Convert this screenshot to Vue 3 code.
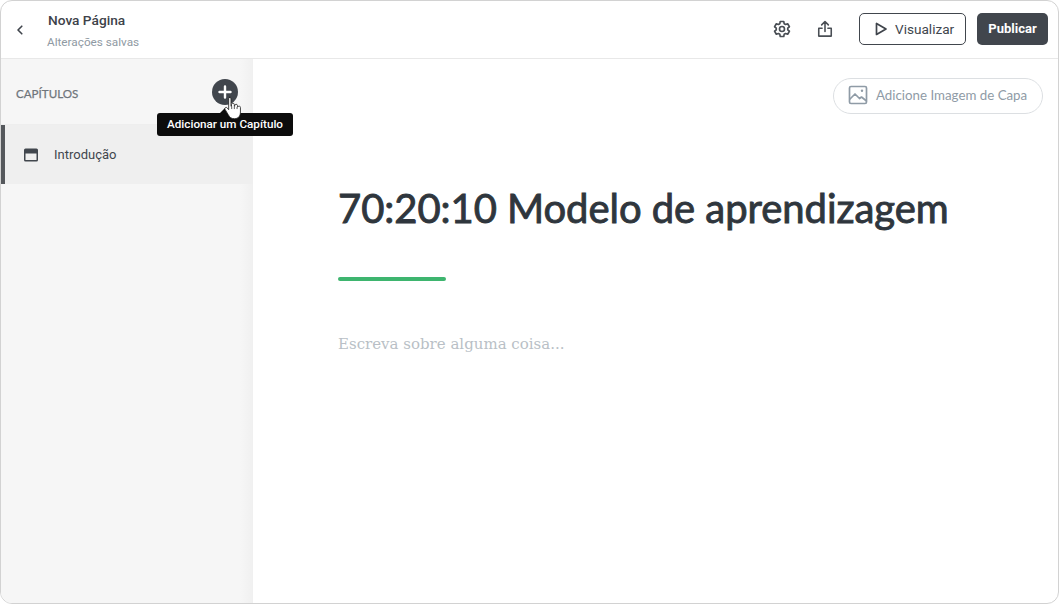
<script setup>
const chapters = [{ id: 1, title: "Introdução" }];
</script>

<template>
  <div class="frame">
    <header class="topbar">
      <div class="top-left">
        <button class="back" aria-label="Voltar">
          <svg width="12" height="12" viewBox="0 0 12 12" fill="none" stroke="#3f444b" stroke-width="1.6" stroke-linecap="round" stroke-linejoin="round"><path d="M7.800 2.200 4 6l3.800 3.800" /></svg>
        </button>
        <div class="page-info">
          <div class="page-name">Nova Página</div>
          <div class="page-status">Alterações salvas</div>
        </div>
      </div>
      <div class="top-right">
        <button class="icon-btn" aria-label="Configurações">
          <svg width="20" height="20" viewBox="0 0 24 24" fill="none" stroke="#4a4f55" stroke-width="2" stroke-linejoin="round"><path d="M9.900 3h4.200l.5 2.600 1.700 1 2.500-.9 2.100 3.600-2 1.700v2l2 1.700-2.100 3.600-2.500-.9-1.700 1-.5 2.600H9.900l-.5-2.600-1.700-1-2.500.9-2.100-3.600 2-1.700v-2l-2-1.700 2.100-3.600 2.500.9 1.700-1z" /><circle cx="12" cy="12" r="3" /></svg>
        </button>
        <button class="icon-btn" aria-label="Compartilhar">
          <svg width="20" height="20" viewBox="0 0 24 24" fill="none" stroke="#4a4f55" stroke-width="1.9" stroke-linecap="round" stroke-linejoin="round"><path d="M12 15V3.500M8 7l4-4 4 4M8.500 11H4.500v9.500h15V11h-4" /></svg>
        </button>
        <button class="preview">
          <svg width="14" height="14" viewBox="0 0 14 14" fill="none" stroke="#3f444b" stroke-width="1.700" stroke-linejoin="round"><path d="M2.500 1.500v11l9.500-5.500z" /></svg>
          Visualizar
        </button>
        <button class="publish">Publicar</button>
      </div>
    </header>

    <div class="body">
      <aside class="sidebar">
        <div class="side-head">
          <span class="side-title">CAPÍTULOS</span>
          <button class="add" aria-label="Adicionar um Capítulo">
            <svg width="14" height="14" viewBox="0 0 14 14" stroke="#fff" stroke-width="2.400" stroke-linecap="round"><path d="M7 1.500v11M1.500 7h11" /></svg>
          </button>
          <div class="tooltip">Adicionar um Capítulo</div>
          <svg class="cursor" width="21" height="26" viewBox="0 0 20 24">
            <path d="M6 1.800c.9 0 1.600.7 1.600 1.600v7l.5-.1V8.800c0-1.900 2.500-1.900 2.700-.1v1.600l.4.1V9.600c.2-1.600 2.500-1.500 2.600.1v1.200l.4.1c.3-1.300 2.400-1.100 2.400.6v4.200c0 3.300-1.700 6.400-5.600 6.400-3.200 0-4.600-1.300-6-3.800l-3-5c-.9-1.500 1-2.700 2-1.500l1.400 1.700V3.400c0-.9.7-1.600 1.600-1.600z" fill="#fff" stroke="#222" stroke-width=".8" stroke-linejoin="round" />
            <path d="M8.300 10.500v2.500M10.800 10.500v2.500M13.400 11v2" stroke="#222" stroke-width=".7" fill="none" />
          </svg>
        </div>
        <div v-for="c in chapters" :key="c.id" class="chapter">
          <svg width="14" height="14" viewBox="0 0 14 14"><path fill-rule="evenodd" d="M1.500 .5h11A1.500 1.500 0 0 1 14 2v10a1.500 1.500 0 0 1-1.500 1.500h-11A1.500 1.500 0 0 1 0 12V2A1.500 1.500 0 0 1 1.500 .5zM1.500 5.500V12h11V5.500z" fill="#41464d" /></svg>
          <span>{{ c.title }}</span>
        </div>
      </aside>

      <main class="editor">
        <div class="cover-row">
          <button class="cover">
            <svg width="20" height="20" viewBox="0 0 20 20" fill="none" stroke="#8f9ba6" stroke-width="1.700" stroke-linejoin="round"><rect x="1.500" y="1.500" width="17" height="17" rx="1.500" /><path d="M1.500 14.500 7 9l4.500 4.500 2-1.500 5 4" /><circle cx="14" cy="5.800" r="1.200" fill="#8f9ba6" stroke="none" /></svg>
            <span>Adicione Imagem de Capa</span>
          </button>
        </div>
        <div class="content">
          <h1>70:20:10 Modelo de aprendizagem</h1>
          <div class="rule"></div>
          <p class="placeholder">Escreva sobre alguma coisa...</p>
        </div>
      </main>
    </div>
  </div>
</template>

<style scoped>
.frame {
  box-sizing: border-box;
  width: 1059px;
  height: 604px;
  border: 1px solid #d2d2d2;
  border-radius: 12px;
  background: #fff;
  overflow: hidden;
  display: flex;
  flex-direction: column;
  font-family: Roboto, sans-serif;
}
button {
  font-family: inherit;
  cursor: pointer;
}
.topbar {
  box-sizing: border-box;
  height: 58px;
  flex: none;
  display: flex;
  justify-content: space-between;
  align-items: center;
  border-bottom: 1px solid #e8e8e8;
  padding: 0 10px 0 12px;
}
.top-left {
  display: flex;
  align-items: center;
}
.back {
  border: none;
  background: none;
  padding: 0;
  width: 14px;
  height: 14px;
  display: flex;
  align-items: center;
  justify-content: center;
  margin-right: 20px;
}
.page-name {
  font-size: 13.7px;
  font-weight: 500;
  color: #3d4249;
  line-height: 20px;
  margin: 1px 0 0 1px;
}
.page-status {
  font-size: 11.75px;
  color: #8f9aa3;
  line-height: 16px;
  margin-top: 4px;
}
.top-right {
  display: flex;
  align-items: center;
  margin-bottom: 2px;
}
.icon-btn {
  border: none;
  background: none;
  padding: 0;
  width: 20px;
  height: 20px;
  margin-right: 23px;
}
.icon-btn:nth-child(2) {
  margin-right: 24px;
}
.preview {
  box-sizing: border-box;
  width: 107px;
  height: 32px;
  border: 1px solid #41464d;
  border-radius: 5px;
  background: #fff;
  color: #41464d;
  font-size: 13.6px;
  display: flex;
  align-items: center;
  justify-content: flex-start;
  gap: 7px;
  padding: 0 0 0 14px;
  margin-right: 11px;
}
.publish {
  box-sizing: border-box;
  width: 71px;
  height: 32px;
  border: none;
  border-radius: 5px;
  background: #41464d;
  color: #fff;
  font-size: 13px;
  font-weight: 700;
  padding: 0;
}
.body {
  flex: 1;
  display: flex;
  min-height: 0;
}
.sidebar {
  width: 252px;
  flex: none;
  background: linear-gradient(to right, #f6f6f6 95%, #f0f0f0);
}
.side-head {
  box-sizing: border-box;
  position: relative;
  height: 66px;
  display: flex;
  align-items: center;
  justify-content: space-between;
  padding: 0 15px;
  border-bottom: 1px solid #eeeeee;
}
.side-title {
  font-family: Lato, sans-serif;
  font-size: 11.6px;
  color: #6f757b;
  margin-top: 4px;
  -webkit-text-stroke: 0.25px #6f757b;
}
.add {
  width: 26px;
  height: 26px;
  border: none;
  border-radius: 50%;
  background: #41464d;
  padding: 0;
  display: flex;
  align-items: center;
  justify-content: center;
}
.tooltip {
  position: absolute;
  left: 156px;
  top: 54px;
  box-sizing: border-box;
  width: 136px;
  height: 23px;
  background: #0c0c0c;
  color: #fff;
  border-radius: 3px;
  font-size: 11.7px;
  font-weight: 500;
  line-height: 23px;
  text-align: center;
  white-space: nowrap;
  z-index: 2;
}
.tooltip::before {
  content: "";
  position: absolute;
  left: 62px;
  top: -5px;
  border-left: 6px solid transparent;
  border-right: 6px solid transparent;
  border-bottom: 6px solid #0c0c0c;
}
.cursor {
  position: absolute;
  left: 222px;
  top: 36px;
  z-index: 3;
}
.chapter {
  box-sizing: border-box;
  height: 59px;
  background: #efefef;
  border-left: 4px solid #55585c;
  display: flex;
  align-items: center;
  padding-left: 19px;
  gap: 16px;
  font-size: 13px;
  color: #41464d;
}
.editor {
  flex: 1;
  min-width: 0;
}
.cover-row {
  display: flex;
  justify-content: flex-end;
  padding: 19px 15px 0 0;
}
.cover {
  box-sizing: border-box;
  width: 210px;
  height: 36px;
  border: 1px solid #dcdfe2;
  border-radius: 18px;
  background: #fff;
  color: #8f9ba6;
  font-family: Lato, sans-serif;
  font-size: 13.3px;
  display: flex;
  align-items: center;
  justify-content: flex-start;
  gap: 8px;
  padding: 0 0 2px 14px;
}
.content {
  padding: 70px 0 0 85px;
}
h1 {
  margin: 0;
  font-family: Lato, sans-serif;
  font-size: 40px;
  font-weight: 400;
  line-height: 48px;
  color: #2f363d;
  -webkit-text-stroke: 0.9px #2f363d;
  letter-spacing: -0.05px;
}
.rule {
  width: 108px;
  height: 4px;
  border-radius: 2px;
  background: #3eb56f;
  margin-top: 45px;
}
.placeholder {
  margin: 51px 0 0;
  font-family: "DejaVu Serif", serif;
  font-size: 15px;
  line-height: 24px;
  color: #b9bfc6;
}
</style>

<style>
html, body {
  margin: 0;
  background: #fff;
}
</style>
